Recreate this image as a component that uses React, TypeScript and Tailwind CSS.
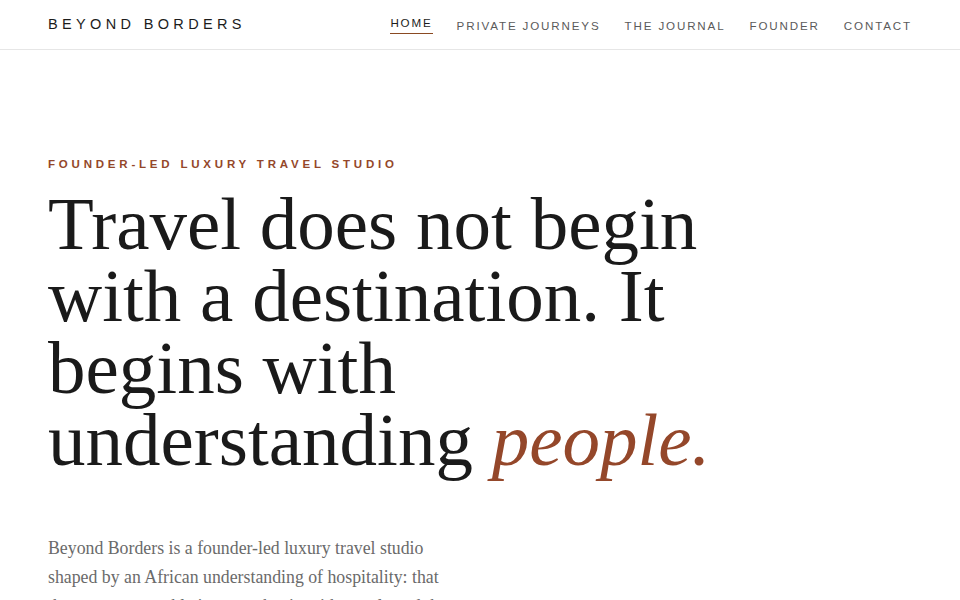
import React from 'react';

const NAV_ITEMS = ['HOME', 'PRIVATE JOURNEYS', 'THE JOURNAL', 'FOUNDER', 'CONTACT'];

function Header() {
    return (<header className="flex h-[50px] items-center justify-between border-b border-[#e6e6e6] px-12 pt-[1px]">
      <div className="text-[14.5px] font-normal tracking-[0.3em] text-[#1c1c1c]" style={{ fontFamily: '"Liberation Sans", Arial, sans-serif' }}>
        BEYOND BORDERS
      </div>
      <nav className="flex items-center gap-[24px] pt-[1px]" style={{ fontFamily: '"Liberation Sans", Arial, sans-serif' }}>
        {NAV_ITEMS.map((item) => (<a key={item} href="#" className={`text-[11.6px] tracking-[0.16em] ${item === 'HOME'
                ? '-mt-[3px] border-b border-[#8a4a22] pb-[1px] text-[#1c1c1c]'
                : 'text-[#5a5a5a]'}`}>
            {item}
          </a>))}
      </nav>
    </header>);
}

export default function App() {
    return (<div className="min-h-screen bg-white">
      <Header />

      {/* Hero */}
      <section className="px-12 pt-[106px]">
        <p className="text-[11.5px] font-bold tracking-[0.33em] text-[#94472a]" style={{ fontFamily: '"Liberation Sans", Arial, sans-serif' }}>
          FOUNDER-LED LUXURY TRAVEL STUDIO
        </p>
        <h1 className="mt-[15px] max-w-[720px] text-[75px] leading-[72px] text-[#1a1a1a]" style={{ fontFamily: '"Liberation Serif", "Times New Roman", serif' }}>
          Travel does not begin with a destination. It begins with understanding{' '}
          <em className="text-[#94472a]">people.</em>
        </h1>
        <p className="mt-[58px] max-w-[408px] text-[17.8px] leading-[29px] text-[#6a6a6a]" style={{ fontFamily: '"Liberation Serif", "Times New Roman", serif' }}>
          Beyond Borders is a founder-led luxury travel studio shaped by an African understanding of hospitality: that the most memorable journeys begin with people and the quiet details of care.
        </p>
      </section>
    </div>);
}
